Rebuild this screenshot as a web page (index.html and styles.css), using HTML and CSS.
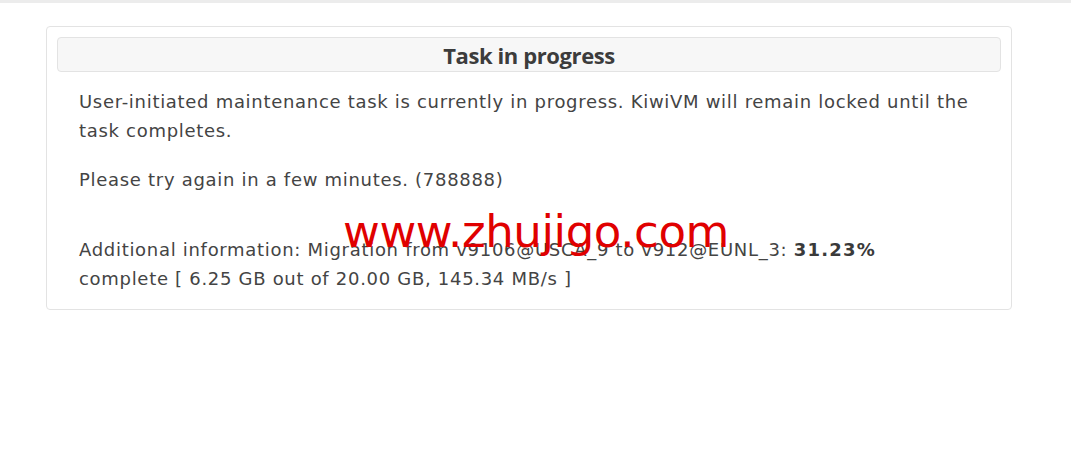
FILE: index.html
```html
<!DOCTYPE html>
<html lang="en">
<head>
    <meta charset="UTF-8">
    <meta name="viewport" content="width=device-width, initial-scale=1.0">
    <title>KiwiVM - Task in progress</title>
    <link rel="stylesheet" href="styles.css">
</head>
<body>
    <div class="top-bar"></div>

    <div class="page">
        <div class="panel">
            <div class="panel-heading">
                <h2>Task in progress</h2>
            </div>

            <div class="panel-body">
                <p>
                    User-initiated maintenance task is currently in progress. KiwiVM will remain locked until the
                    task completes.
                </p>
                <p class="retry">Please try again in a few minutes. (788888)</p>
                <p>
                    Additional information: Migration from v9106@USCA_9 to v912@EUNL_3: <b>31.23%</b><br>
                    complete [ 6.25 GB out of 20.00 GB, 145.34 MB/s ]
                </p>
            </div>

            <div class="watermark">www.zhujigo.com</div>
        </div>
    </div>
</body>
</html>
```

FILE: styles.css
```css
* {
    margin: 0;
    padding: 0;
    box-sizing: border-box;
}

body {
    font-family: "DejaVu Sans", Verdana, sans-serif;
    background: #fff;
    color: #444;
}

.top-bar {
    height: 3px;
    background: #ececec;
}

.page {
    padding: 23px 59px 0 46px;
}

.panel {
    position: relative;
    border: 1px solid #e3e3e3;
    border-radius: 4px;
    padding: 10px 10px 16px;
}

.panel-heading {
    background: #f7f7f7;
    border: 1px solid #e3e3e3;
    border-radius: 4px;
    height: 35px;
    display: flex;
    align-items: center;
    justify-content: center;
}

.panel-heading h2 {
    font-family: "Open Sans", sans-serif;
    font-size: 22px;
    font-weight: 700;
    color: #3c3c3c;
    letter-spacing: -0.4px;
}

.panel-body {
    padding: 15px 22px 0;
}

.panel-body p {
    font-size: 18px;
    letter-spacing: 0.7px;
    line-height: 29px;
    margin-bottom: 20px;
}

.panel-body p:last-child {
    margin-bottom: 0;
}

.panel-body .retry {
    margin-bottom: 41px;
}

.panel-body b {
    color: #3a3a3a;
    letter-spacing: 1.2px;
}

.watermark {
    position: absolute;
    left: 296px;
    top: 178px;
    font-family: "DejaVu Sans", sans-serif;
    font-size: 45px;
    color: #e00000;
    letter-spacing: -0.4px;
}
```
